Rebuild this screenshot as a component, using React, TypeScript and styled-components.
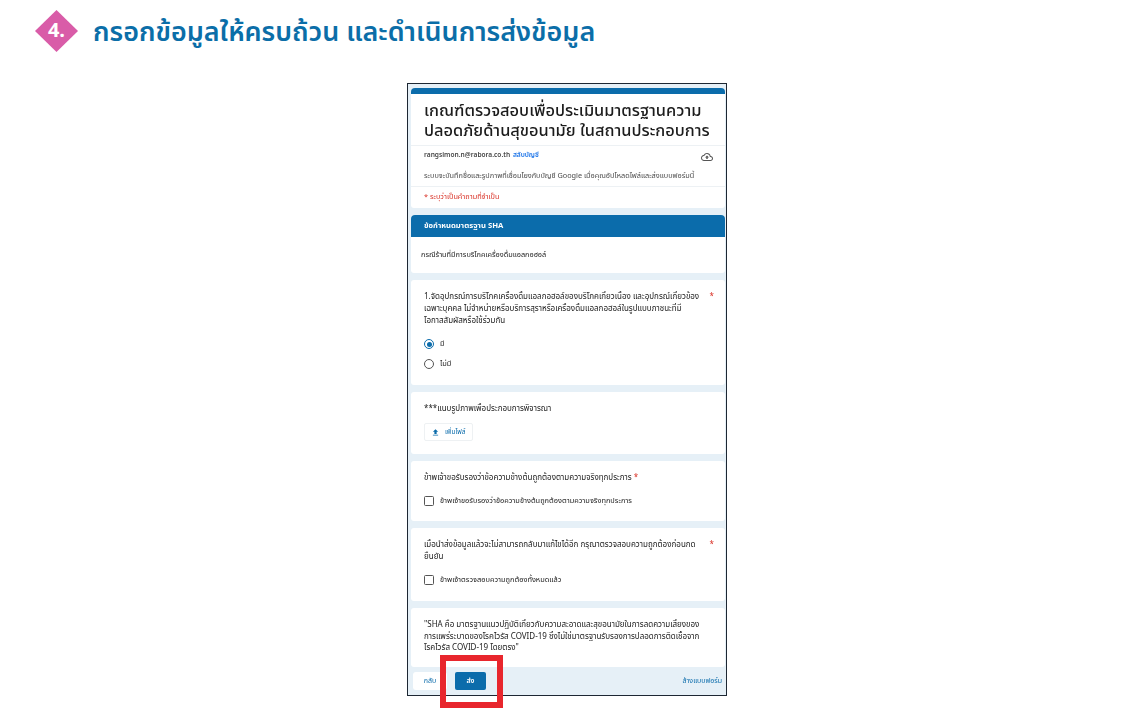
import styled, { createGlobalStyle } from "styled-components";

const Global = createGlobalStyle`
  html, body {
    margin: 0;
    padding: 0;
    background: #fff;
    font-family: "Noto Sans Thai", "Noto Sans", "Liberation Sans", sans-serif;
  }
`;

const Page = styled.div`
  position: relative;
  width: 1132px;
  height: 718px;
  overflow: hidden;
  background: #fff;
`;

const Heading = styled.div`
  display: flex;
  align-items: center;
  gap: 15px;
  height: 42px;
  padding: 10px 0 0 35px;
`;

const Diamond = styled.div`
  position: relative;
  width: 43px;
  height: 42px;
  display: flex;
  align-items: center;
  justify-content: center;
  color: #fff;
  font-size: 20px;
  font-weight: 700;
  &::before {
    content: "";
    position: absolute;
    inset: 0;
    background: #d95ca8;
    clip-path: polygon(50% 0, 100% 50%, 50% 100%, 0 50%);
  }
  span {
    position: relative;
  }
`;

const Title = styled.h1`
  margin: 3px 0 0;
  font-size: 26.9px;
  font-weight: 600;
  color: #0b6ea8;
  white-space: nowrap;
`;

const Shot = styled.div`
  box-sizing: border-box;
  width: 320px;
  height: 613px;
  margin: 31px 0 0 407px;
  border: 1px solid #1d2733;
  background: #e6f0f7;
  padding: 4px 1px 0 3px;
  display: flex;
  flex-direction: column;
  gap: 7px;
  overflow: hidden;
  filter: blur(0.2px);
`;

const Card = styled.section<{ $h: number }>`
  box-sizing: border-box;
  height: ${({ $h }) => $h}px;
  background: #fff;
  border-radius: 3px;
  padding: 11px 11px 11px 13px;
  color: #1a1a1a;
  font-size: 8px;
  line-height: 12px;
  display: flex;
  flex-direction: column;
`;

const IntroCard = styled(Card)`
  border-top: 6px solid #0b6cab;
  border-radius: 4px 4px 3px 3px;
  padding: 0;
`;

const FormTitle = styled.div`
  padding: 8px 13px 4px;
  font-size: 16.4px;
  line-height: 19.5px;
  color: #1c1c1c;
  font-weight: 500;
  white-space: nowrap;
  border-bottom: 1px solid #edf1f4;
`;

const Account = styled.div`
  position: relative;
  padding: 4px 13px 5px;
  border-bottom: 1px solid #edf1f4;
  display: flex;
  flex-direction: column;
  gap: 9px;
  font-size: 7.3px;
  line-height: 11px;
  white-space: nowrap;
  color: #4a4a4a;
  svg {
    position: absolute;
    right: 12px;
    top: 5px;
  }
`;

const Email = styled.div`
  font-size: 6.6px;
  font-weight: 600;
  color: #444;
  a {
    color: #1a73e8;
    margin-left: 1px;
  }
`;

const RequiredNote = styled.div`
  padding: 4px 13px;
  font-size: 7.3px;
  line-height: 11px;
  color: #d93025;
`;

const SectionHead = styled.div`
  background: #0b6cab;
  color: #fff;
  border-radius: 4px 4px 0 0;
  height: 23px;
  padding: 0 13px;
  display: flex;
  align-items: center;
  font-size: 7.7px;
  font-weight: 700;
`;

const SectionCard = styled(Card)`
  padding: 0;
`;

const SectionBody = styled.div`
  padding: 12px 10px;
  font-size: 7.3px;
`;

const Question = styled.div`
  display: flex;
  justify-content: space-between;
  gap: 8px;
  white-space: nowrap;
`;

const Required = styled.span`
  color: #d93025;
`;

const Options = styled.div`
  display: flex;
  flex-direction: column;
  gap: 10px;
  margin-top: 12px;
`;

const Option = styled.label`
  display: flex;
  align-items: center;
  gap: 6px;
  height: 10px;
  font-size: 7.4px;
`;

const Radio = styled.span<{ $on?: boolean }>`
  box-sizing: border-box;
  width: 10px;
  height: 10px;
  border-radius: 50%;
  border: 1px solid ${({ $on }) => ($on ? "#0b6cab" : "#555")};
  display: flex;
  align-items: center;
  justify-content: center;
  &::after {
    content: "";
    width: 5px;
    height: 5px;
    border-radius: 50%;
    background: ${({ $on }) => ($on ? "#0b6cab" : "transparent")};
  }
`;

const Check = styled.span`
  box-sizing: border-box;
  width: 10px;
  height: 10px;
  border-radius: 1.5px;
  border: 1px solid #555;
`;

const AddFile = styled.button`
  box-sizing: border-box;
  display: inline-flex;
  align-items: center;
  gap: 5px;
  width: 49px;
  height: 18px;
  margin-top: 8px;
  padding: 0 0 0 6px;
  background: #fff;
  border: 1px solid #eef1f3;
  border-radius: 2px;
  color: #0b6cab;
  font: inherit;
  font-size: 6.6px;
`;

const NoteCard = styled(Card)`
  padding-top: 12px;
  line-height: 11.5px;
  white-space: nowrap;
`;

const Footer = styled.div`
  flex: 1;
  margin-top: -7px;
  display: flex;
  align-items: center;
  padding: 0 3px 0 2px;
  font-size: 7px;
`;

const Back = styled.button`
  width: 34px;
  height: 18px;
  padding: 0;
  background: #fff;
  border: none;
  border-radius: 3px;
  color: #0b6cab;
  font: inherit;
`;

const Send = styled.button`
  width: 31px;
  height: 18px;
  padding: 0;
  margin-left: 8px;
  background: #0b6cab;
  border: none;
  border-radius: 2px;
  color: #fff;
  font: inherit;
  font-weight: 600;
`;

const Clear = styled.a`
  margin-left: auto;
  color: #0b6cab;
`;

const Highlight = styled.div`
  position: absolute;
  left: 440px;
  top: 655px;
  width: 63px;
  height: 53px;
  box-sizing: border-box;
  border: 6px solid #e8262d;
  pointer-events: none;
`;

const CloudIcon = () => (
  <svg width="12" height="12" viewBox="0 0 24 24" fill="#555">
    <path d="M19.35 10.04C18.67 6.59 15.64 4 12 4 9.11 4 6.6 5.64 5.35 8.04 2.34 8.36 0 10.91 0 14c0 3.31 2.69 6 6 6h13c2.76 0 5-2.24 5-5 0-2.64-2.05-4.78-4.65-4.96zM19 18H6c-2.21 0-4-1.79-4-4 0-2.05 1.53-3.76 3.56-3.97l1.07-.11.5-.95C8.08 7.14 9.94 6 12 6c2.62 0 4.88 1.86 5.39 4.43l.3 1.5 1.53.11c1.56.1 2.78 1.41 2.78 2.96 0 1.65-1.35 3-3 3zM8 13h2.55v3h2.9v-3H16l-4-4z" />
  </svg>
);

const UploadIcon = () => (
  <svg width="9" height="9" viewBox="0 0 24 24" fill="#0b6cab">
    <path d="M9 16h6v-6h4l-7-7-7 7h4zm-4 2h14v2H5z" />
  </svg>
);

export default function App() {
  return (
    <Page>
      <Global />
      <Heading>
        <Diamond>
          <span>4.</span>
        </Diamond>
        <Title>กรอกข้อมูลให้ครบถ้วน และดำเนินการส่งข้อมูล</Title>
      </Heading>
      <Shot>
        <IntroCard $h={120}>
          <FormTitle>
            เกณฑ์ตรวจสอบเพื่อประเมินมาตรฐานความ
            <br />
            ปลอดภัยด้านสุขอนามัย ในสถานประกอบการ
          </FormTitle>
          <Account>
            <Email>
              rangsimon.n@rabora.co.th <a>สลับบัญชี</a>
            </Email>
            <div>ระบบจะบันทึกชื่อและรูปภาพที่เชื่อมโยงกับบัญชี Google เมื่อคุณอัปโหลดไฟล์และส่งแบบฟอร์มนี้</div>
            <CloudIcon />
          </Account>
          <RequiredNote>* ระบุว่าเป็นคำถามที่จำเป็น</RequiredNote>
        </IntroCard>

        <SectionCard $h={58}>
          <SectionHead>ข้อกำหนดมาตรฐาน SHA</SectionHead>
          <SectionBody>กรณีร้านที่มีการบริโภคเครื่องดื่มแอลกอฮอล์</SectionBody>
        </SectionCard>

        <Card $h={105}>
          <Question>
            <span>
              1.จัดอุปกรณ์การบริโภคเครื่องดื่มแอลกอฮอล์ของบริโภคเกี่ยวเนื่อง และอุปกรณ์เกี่ยวข้อง
              <br />
              เฉพาะบุคคล ไม่จำหน่ายหรือบริการสุราหรือเครื่องดื่มแอลกอฮอล์ในรูปแบบภาชนะที่มี
              <br />
              โอกาสสัมผัสหรือใช้ร่วมกัน
            </span>
            <Required>*</Required>
          </Question>
          <Options>
            <Option>
              <Radio $on />
              มี
            </Option>
            <Option>
              <Radio />
              ไม่มี
            </Option>
          </Options>
        </Card>

        <Card $h={62}>
          <div>***แนบรูปภาพเพื่อประกอบการพิจารณา</div>
          <AddFile>
            <UploadIcon />
            เพิ่มไฟล์
          </AddFile>
        </Card>

        <Card $h={60}>
          <div>
            ข้าพเจ้าขอรับรองว่าข้อความข้างต้นถูกต้องตามความจริงทุกประการ <Required>*</Required>
          </div>
          <Options>
            <Option>
              <Check />
              ข้าพเจ้าขอรับรองว่าข้อความข้างต้นถูกต้องตามความจริงทุกประการ
            </Option>
          </Options>
        </Card>

        <Card $h={73}>
          <Question>
            <span>
              เมื่อนำส่งข้อมูลแล้วจะไม่สามารถกลับมาแก้ไขได้อีก กรุณาตรวจสอบความถูกต้องก่อนกด
              <br />
              ยืนยัน
            </span>
            <Required>*</Required>
          </Question>
          <Options>
            <Option>
              <Check />
              ข้าพเจ้าตรวจสอบความถูกต้องทั้งหมดแล้ว
            </Option>
          </Options>
        </Card>

        <NoteCard $h={59}>
          <div>
            "SHA คือ มาตรฐานแนวปฏิบัติเกี่ยวกับความสะอาดและสุขอนามัยในการลดความเสี่ยงของ
            <br />
            การแพร่ระบาดของโรคไวรัส COVID-19 ซึ่งไม่ใช่มาตรฐานรับรองการปลอดการติดเชื้อจาก
            <br />
            โรคไวรัส COVID-19 โดยตรง"
          </div>
        </NoteCard>

        <Footer>
          <Back>กลับ</Back>
          <Send>ส่ง</Send>
          <Clear>ล้างแบบฟอร์ม</Clear>
        </Footer>
      </Shot>
      <Highlight />
    </Page>
  );
}
